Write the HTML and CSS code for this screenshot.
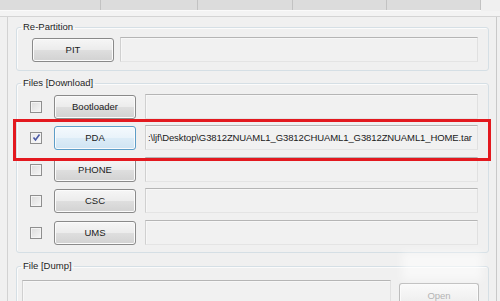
FILE: index.html
```html
<!DOCTYPE html>
<html>
<head>
<meta charset="utf-8">
<link rel="stylesheet" href="styles.css">
</head>
<body>
<div class="tabs">
  <div class="tab t1"></div>
  <div class="tab t2"></div>
  <div class="tab t3"></div>
  <div class="tab t4"></div>
  <div class="tab t5"></div>
</div>
<div class="strip"></div>
<div class="panel">
  <fieldset class="grp g1">
    <legend>Re-Partition</legend>
    <div class="row r-pit">
      <button class="btn">PIT</button>
      <div class="field f-pit"></div>
    </div>
  </fieldset>
  <fieldset class="grp g2">
    <legend>Files [Download]</legend>
    <div class="row">
      <span class="cb"></span>
      <button class="btn">Bootloader</button>
      <div class="field"></div>
    </div>
    <div class="row r-pda">
      <span class="cb checked"><svg width="9" height="9" viewBox="0 0 9 9"><path d="M1.5 4.5 L3.5 7 L7.5 1.5" fill="none" stroke="#4b5aa5" stroke-width="1.6"/></svg></span>
      <button class="btn hot">PDA</button>
      <div class="field">:\ljf\Desktop\G3812ZNUAML1_G3812CHUAML1_G3812ZNUAML1_HOME.tar</div>
    </div>
    <div class="row">
      <span class="cb"></span>
      <button class="btn">PHONE</button>
      <div class="field"></div>
    </div>
    <div class="row r-csc">
      <span class="cb"></span>
      <button class="btn">CSC</button>
      <div class="field"></div>
    </div>
    <div class="row">
      <span class="cb"></span>
      <button class="btn">UMS</button>
      <div class="field"></div>
    </div>
  </fieldset>
  <fieldset class="grp g3">
    <legend>File [Dump]</legend>
    <div class="row r-dump">
      <div class="field f-dump"></div>
      <button class="btn open">Open</button>
    </div>
  </fieldset>
</div>
<div class="highlight"></div>
<div class="watermark"></div>
</body>
</html>
```
FILE: styles.css
```css
html, body {
  margin: 0;
  padding: 0;
}
body {
  width: 500px;
  height: 301px;
  overflow: hidden;
  background: #f0f0f0;
  font-family: "Liberation Sans", Arial, sans-serif;
  font-size: 9.5px;
  color: #222;
  position: relative;
}
.tabs {
  display: flex;
  height: 10px;
  width: 481px;
  border-bottom: 1px solid #fafafa;
}
.tab {
  background: #dcdcdc;
  border-right: 1px solid #c2c2c2;
  height: 10px;
}
.t1 { width: 100px; }
.t2 { width: 96px; }
.t3 { width: 94px; }
.t4 { width: 93px; }
.t5 { width: 93px; }
.strip {
  height: 5px;
  border-bottom: 1px solid #d4d4d4;
  background: #f3f3f3;
}
.panel {
  margin-left: 7px;
  width: 473px;
  height: 283px;
  border-left: 1px solid #d2d2d2;
  border-right: 1px solid #c9c9c9;
  padding: 4px 7px 0 8px;
}
.grp {
  margin: 0;
  padding: 0;
  border: 1px solid #d5dfe5;
  border-radius: 3px;
  box-shadow: inset 1px 1px 0 #fbfbfb;
  min-inline-size: 0;
}
.grp legend {
  margin-left: 4px;
  padding: 0 2px;
  line-height: 12px;
  font-size: 9.5px;
  color: #1e1e1e;
}
.row {
  display: flex;
  align-items: center;
  height: 25px;
}
.g1 {
  padding: 4px 0 8px 0;
}
.r-pit .btn {
  margin-left: 15px;
}
.field {
  box-sizing: border-box;
  height: 25px;
  width: 333px;
  margin-left: 9px;
  background: #f1f1f1;
  border: 1px solid;
  border-color: #b5b5b5 #e0e0e0 #e4e4e4 #d0d0d0;
  box-shadow: inset 1px 1px 0 #f7f7f7;
  display: flex;
  align-items: center;
  padding-left: 2px;
  white-space: nowrap;
  overflow: hidden;
  color: #1a1a1a;
  letter-spacing: -0.1px;
}
.r-pit .f-pit {
  margin-left: 6px;
  width: 358px;
}
.g2 {
  margin-top: 6px;
  padding: 5px 0 7px 0;
  display: flex;
  flex-direction: column;
  gap: 6px;
}
.r-pda, .r-csc {
  margin-bottom: 1px;
}
.g3 {
  margin-top: 7px;
  padding: 2px 0 0 0;
}
.r-dump {
  height: 30px;
  align-items: flex-start;
}
.cb {
  box-sizing: border-box;
  width: 12px;
  height: 12px;
  margin-left: 13px;
  margin-right: 12px;
  border: 1px solid #8f8f8f;
  background: linear-gradient(135deg, #dcdcdc, #f6f6f6);
  box-shadow: inset 0 0 0 1px #f4f4f4;
  display: flex;
  align-items: center;
  justify-content: center;
}
.cb.checked {
  background: linear-gradient(135deg, #e8e8ec, #fafafa);
}
.btn {
  box-sizing: border-box;
  width: 82px;
  height: 24px;
  padding: 0;
  font: inherit;
  font-size: 9.5px;
  color: #1a1a1a;
  border: 1px solid #8a8a8a;
  border-radius: 3px;
  background: linear-gradient(#f6f6f6 0%, #ececec 48%, #dedede 52%, #d2d2d2 100%);
  box-shadow: inset 0 0 0 1px #fbfbfb;
}
.btn.hot {
  border-color: #5c9dc8;
  background: linear-gradient(#f4f9fd 0%, #e9f3fa 48%, #dcecf7 52%, #cfe4f3 100%);
}
.r-dump .f-dump {
  margin-left: 5px;
  width: 369px;
  height: 30px;
  margin-top: 6px;
}
.r-dump .open {
  margin-left: 8px;
  margin-top: 9px;
  width: 80px;
  height: 20px;
  color: #b4b4b4;
  padding-top: 4px;
  background: linear-gradient(#fafafa, #eeeeee);
  border-color: #bcbcbc;
  border-bottom: none;
  border-radius: 3px 3px 0 0;
}
.highlight {
  position: absolute;
  left: 13px;
  top: 119px;
  width: 478px;
  height: 42px;
  box-sizing: border-box;
  border: 3px solid #e3191f;
}
.watermark {
  position: absolute;
  left: 402px;
  top: 252px;
  width: 80px;
  height: 28px;
  background: rgba(255, 255, 255, 0.55);
  filter: blur(4px);
}
```
